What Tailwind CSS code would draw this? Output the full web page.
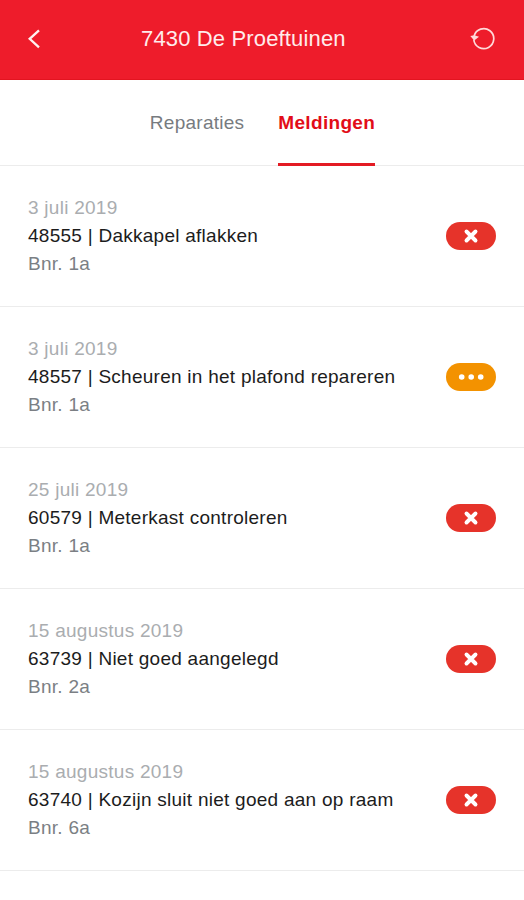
<!DOCTYPE html>
<html lang="nl">
<head>
<meta charset="utf-8">
<title>7430 De Proeftuinen</title>
<script src="https://cdn.jsdelivr.net/npm/@tailwindcss/browser@4"></script>
</head>
<body class="bg-white font-['Liberation_Sans',Arial,sans-serif] text-[19px] leading-7 tracking-[0.26px]">
<div class="flex h-[900px] w-[524px] flex-col overflow-hidden">
  <header class="flex h-20 items-center border-b border-[#e31420] bg-[#ee1c2b] pr-7 pl-[26px] pb-[2px] text-white">
    <button class="w-7" aria-label="Terug">
      <svg class="h-5 w-4" viewBox="0 0 16 20" fill="none" stroke="#fff0f0" stroke-width="2.3"><path d="M13 1.3 3.7 9.8 13 18.3"/></svg>
    </button>
    <h1 class="mr-auto ml-[87px] text-[22px] leading-7 tracking-[0.15px] text-[#ffecec]">7430 De Proeftuinen</h1>
    <button class="w-[26px]" aria-label="Vernieuwen">
      <svg class="h-6 w-[26px]" viewBox="0 0 26 24" fill="none" stroke="#ffdada" stroke-width="1.7"><path d="M3.8 12.5A10 10 0 1 0 4.1 9"/><path d="M.3 9 4.2 13.4 9 9.8 4.4 8.2Z" fill="#ffdada" stroke="none"/></svg>
    </button>
  </header>
  <nav class="flex h-[86px] shrink-0 justify-center gap-[34px] border-b border-[#ececec] pl-px text-[#777b80]">
    <a class="-mb-px pt-[29px]">Reparaties</a>
    <a class="-mb-px border-b-3 border-[#e31b23] pt-[29px] font-bold tracking-[0.32px] text-[#e20d18]">Meldingen</a>
  </nav>
  <main id="list"></main>
</div>
<template id="row">
  <article class="flex h-[141px] items-center justify-between border-b border-[#ececec] px-7">
    <div class="text-[#7b7f84]">
      <p class="date text-[#aaadb0]"></p>
      <h2 class="title text-[#1c1c1c]"></h2>
      <p class="unit"></p>
    </div>
    <span class="badge"></span>
  </article>
</template>
<script>
const items = [
  ["3 juli 2019", "48555 | Dakkapel aflakken", "Bnr. 1a", "closed"],
  ["3 juli 2019", "48557 | Scheuren in het plafond repareren", "Bnr. 1a", "pending"],
  ["25 juli 2019", "60579 | Meterkast controleren", "Bnr. 1a", "closed"],
  ["15 augustus 2019", "63739 | Niet goed aangelegd", "Bnr. 2a", "closed"],
  ["15 augustus 2019", "63740 | Kozijn sluit niet goed aan op raam", "Bnr. 6a", "closed"]
];
const badges = {
  closed: '<svg class="h-7 w-[50px] rounded-full bg-[#e6332a]" viewBox="0 0 50 28"><path d="M20.5 9.5 29.5 18.5M29.5 9.5 20.5 18.5" stroke="#fff" stroke-width="3.9" stroke-linecap="round"/></svg>',
  pending: '<svg class="h-7 w-[50px] rounded-full bg-[#f39200]" viewBox="0 0 50 28" fill="#fff"><circle cx="15.7" cy="14" r="2.8"/><circle cx="25.2" cy="14" r="2.8"/><circle cx="34.7" cy="14" r="2.8"/></svg>'
};
for (const [date, title, unit, state] of items) {
  const row = document.getElementById("row").content.cloneNode(true);
  row.querySelector(".date").textContent = date;
  row.querySelector(".title").textContent = title;
  row.querySelector(".unit").textContent = unit;
  row.querySelector(".badge").innerHTML = badges[state];
  document.getElementById("list").append(row);
}
</script>
</body>
</html>
